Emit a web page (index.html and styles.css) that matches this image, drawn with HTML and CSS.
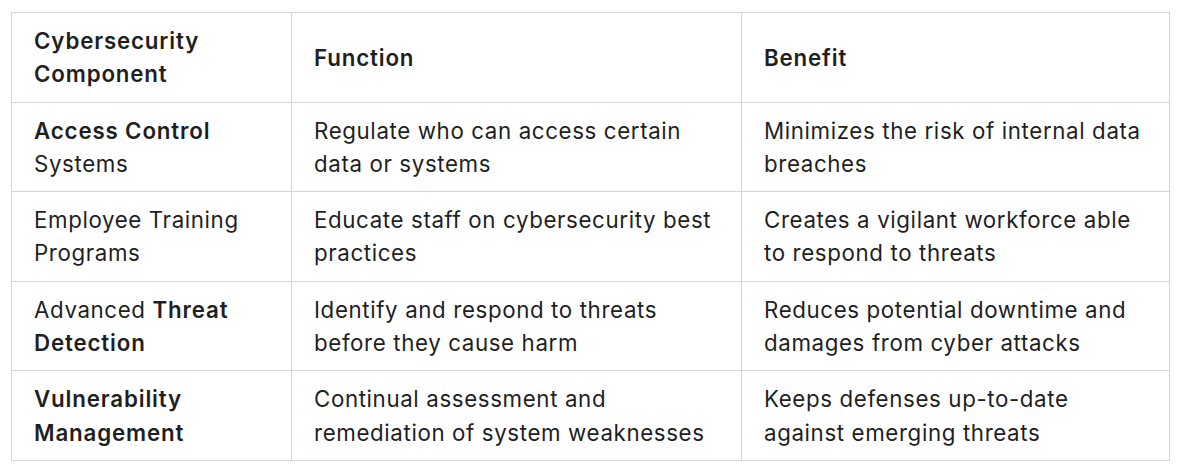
FILE: index.html
```html
<!DOCTYPE html>
<html>
<head>
<meta charset="utf-8">
<link rel="stylesheet" href="styles.css">
</head>
<body>
<table class="grid">
  <colgroup>
    <col class="c1">
    <col class="c2">
    <col class="c3">
  </colgroup>
  <thead>
    <tr>
      <th>Cybersecurity Component</th>
      <th>Function</th>
      <th>Benefit</th>
    </tr>
  </thead>
  <tbody>
    <tr>
      <td><strong>Access Control</strong> Systems</td>
      <td>Regulate who can access certain data or systems</td>
      <td>Minimizes the risk of internal data breaches</td>
    </tr>
    <tr>
      <td>Employee Training Programs</td>
      <td>Educate staff on cybersecurity best practices</td>
      <td>Creates a vigilant workforce able to respond to threats</td>
    </tr>
    <tr>
      <td>Advanced <strong>Threat Detection</strong></td>
      <td>Identify and respond to threats before they cause harm</td>
      <td>Reduces potential downtime and damages from cyber attacks</td>
    </tr>
    <tr>
      <td><strong>Vulnerability Management</strong></td>
      <td>Continual assessment and remediation of system weaknesses</td>
      <td>Keeps defenses up-to-date against emerging threats</td>
    </tr>
  </tbody>
</table>
</body>
</html>
```
FILE: styles.css
```css
html, body {
  margin: 0;
  padding: 0;
  background: #ffffff;
}
body {
  padding: 12px 0 0 11px;
  font-family: Inter, "Noto Sans", sans-serif;
  color: #1f1f1f;
}
.grid {
  border-collapse: collapse;
  width: 1158px;
  table-layout: fixed;
  font-size: 22.3px;
  line-height: 33.3px;
  letter-spacing: 0.62px;
}
.c1 { width: 280px; }
.c2 { width: 450px; }
.c3 { width: 428px; }
.grid th,
.grid td {
  border: 1px solid #d4d4d4;
  padding: 11px 22px 11px 22px;
  text-align: left;
  vertical-align: middle;
}
.grid th,
.grid strong {
  font-weight: 600;
  letter-spacing: 0.85px;
}
```
